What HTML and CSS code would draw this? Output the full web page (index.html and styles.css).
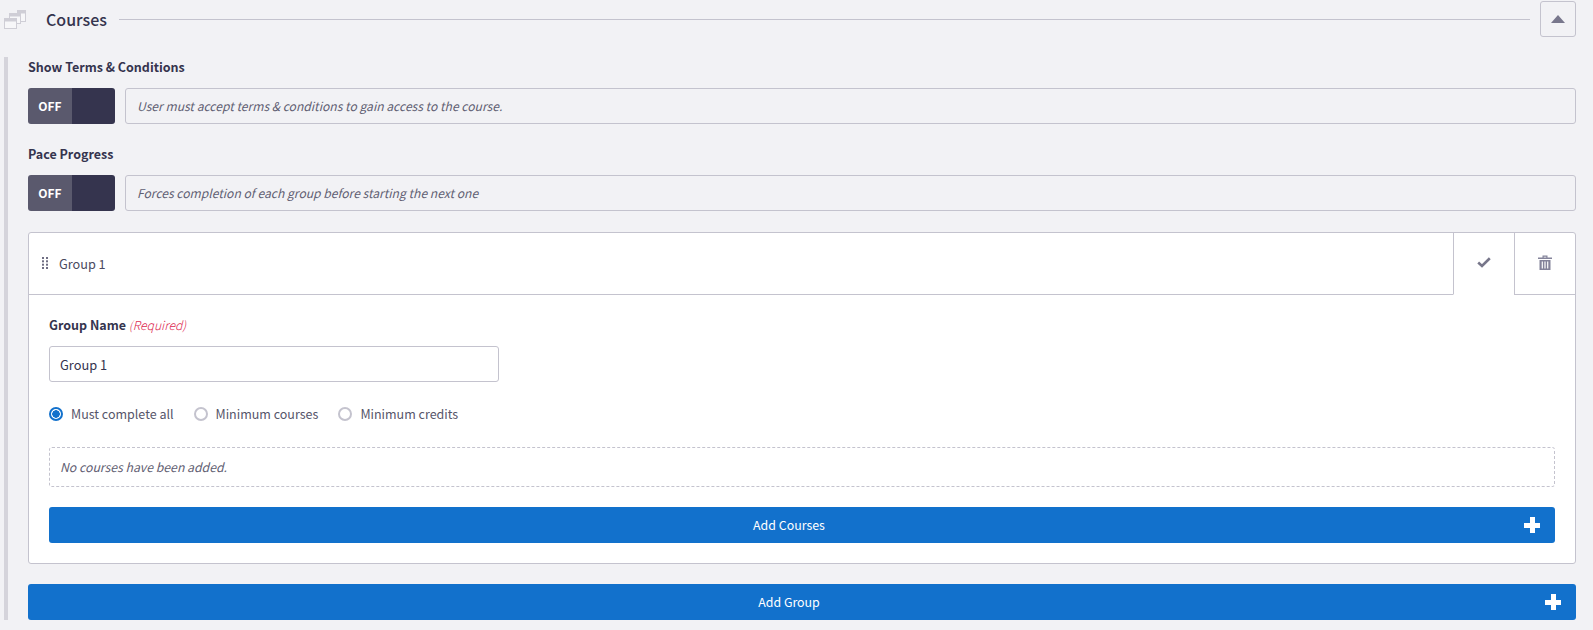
FILE: index.html
```html
<!DOCTYPE html>
<html lang="en">
<head>
<meta charset="utf-8">
<title>Courses</title>
<link rel="stylesheet" href="styles.css">
</head>
<body>
<header class="section-head">
  <svg class="section-icon" width="22" height="19" viewBox="0 0 22 19" fill="none" stroke="#cfced6" stroke-width="1">
    <rect x="13.500" y="0.500" width="8" height="11" fill="#f7f7f9"/>
    <path d="M13.500 2h8" stroke-width="3"/>
    <rect x="5.500" y="3.500" width="11" height="10" fill="#f7f7f9"/>
    <path d="M5.500 5h11" stroke-width="3"/>
    <rect x="0.500" y="8.500" width="12" height="10" fill="#f7f7f9"/>
    <path d="M0.500 10h12" stroke-width="3"/>
  </svg>
  <h2 class="section-title">Courses</h2>
  <div class="section-rule"></div>
  <button class="collapse-btn" type="button" aria-label="Collapse"><span class="caret-up"></span></button>
</header>
<main class="section-body">
  <div class="field">
    <div class="field-label">Show Terms &amp; Conditions</div>
    <div class="toggle-row">
      <div class="toggle"><span class="toggle-off">OFF</span><span class="toggle-rest"></span></div>
      <div class="toggle-desc">User must accept terms &amp; conditions to gain access to the course.</div>
    </div>
  </div>
  <div class="field">
    <div class="field-label">Pace Progress</div>
    <div class="toggle-row">
      <div class="toggle"><span class="toggle-off">OFF</span><span class="toggle-rest"></span></div>
      <div class="toggle-desc">Forces completion of each group before starting the next one</div>
    </div>
  </div>
  <section class="group">
    <div class="group-head">
      <div class="group-title">
        <svg class="grip" width="7" height="12" viewBox="0 0 7 12" fill="#6f6e83">
          <rect x="0" y="0" width="2" height="2"/><rect x="4" y="0" width="2" height="2"/>
          <rect x="0" y="3.300" width="2" height="2"/><rect x="4" y="3.300" width="2" height="2"/>
          <rect x="0" y="6.700" width="2" height="2"/><rect x="4" y="6.700" width="2" height="2"/>
          <rect x="0" y="10" width="2" height="2"/><rect x="4" y="10" width="2" height="2"/>
        </svg>
        <span>Group 1</span>
      </div>
      <div class="group-action is-open">
        <svg width="14" height="11" viewBox="0 0 14 11" fill="none" stroke="#77768a" stroke-width="2.600"><path d="M1.200 5.500 5 9 12.800 1.300"/></svg>
      </div>
      <div class="group-action">
        <svg width="14" height="15" viewBox="0 0 14 15" fill="#84839a"><path d="M0 2.500h14V4H0zM4.500 2.500V.5h5v2H8.300V1.700H5.700v.8zM1.500 5h11v10h-11zM3.700 6.500v7h1.200v-7zM6.400 6.500v7h1.200v-7zM9.100 6.500v7h1.200v-7z" fill-rule="evenodd"/></svg>
      </div>
    </div>
    <div class="group-body">
      <label class="name-label">Group Name <em class="required">(Required)</em></label>
      <input class="name-input" type="text" value="Group 1">
      <div class="radios">
        <span class="radio-item"><span class="radio is-checked"></span>Must complete all</span>
        <span class="radio-item"><span class="radio"></span>Minimum courses</span>
        <span class="radio-item"><span class="radio"></span>Minimum credits</span>
      </div>
      <div class="empty-note">No courses have been added.</div>
      <button class="add-btn" type="button">Add Courses<span class="plus"></span></button>
    </div>
  </section>
  <button class="add-btn add-group" type="button">Add Group<span class="plus"></span></button>
</main>
</body>
</html>
```
FILE: styles.css
```css
* { box-sizing: border-box; }
html, body { height: 100%; }
body {
  margin: 0;
  height: 630px;
  overflow: hidden;
  background: #f2f2f5;
  color: #35344e;
  font-family: "Noto Sans CJK SC", "Source Sans Pro", "Open Sans", sans-serif;
  font-size: 13px;
  line-height: 20px;
}
.section-head {
  display: flex;
  align-items: center;
  height: 36px;
  margin-top: 1px;
  padding: 0 17px 0 4px;
}
.section-icon { flex: none; margin-top: 1px; }
.section-title {
  margin: -1px 12px 0 20px;
  font-size: 16px;
  font-weight: 500;
  line-height: 24px;
}
.section-rule { flex: 1; height: 1px; background: #c4c3ce; }
.collapse-btn {
  display: flex;
  align-items: center;
  justify-content: center;
  flex: none;
  width: 36px;
  height: 36px;
  margin-left: 10px;
  padding: 0;
  background: transparent;
  border: 1px solid #c4c3ce;
  border-radius: 3px;
}
.caret-up {
  width: 0;
  height: 0;
  border-left: 7px solid transparent;
  border-right: 7px solid transparent;
  border-bottom: 8px solid #78778c;
}
.section-body {
  margin: 20px 17px 0 4px;
  padding: 0 0 0 20px;
  border-left: 4px solid #d5d4db;
}
.field { margin-bottom: 20px; }
.field-label {
  height: 31px;
  font-size: 12.500px;
  font-weight: 700;
  line-height: 20px;
}
.toggle-row { display: flex; gap: 10px; }
.toggle {
  display: flex;
  flex: none;
  width: 87px;
  height: 36px;
  border-radius: 3px;
  overflow: hidden;
  color: #fff;
  font-size: 12px;
  font-weight: 700;
}
.toggle-off {
  display: flex;
  align-items: center;
  justify-content: center;
  width: 44px;
  background: #5a596d;
}
.toggle-rest { flex: 1; background: #35344e; }
.toggle-desc {
  display: flex;
  align-items: center;
  flex: 1;
  height: 36px;
  padding-left: 11px;
  border: 1px solid #c4c3ce;
  border-radius: 3px;
  color: #5f5e72;
  font-size: 12.100px;
  font-style: italic;
}
.group {
  background: #fff;
  border: 1px solid #c4c3ce;
  border-radius: 3px;
  margin-top: 21px;
  height: 332px;
}
.group-head { display: flex; height: 62px; }
.group-title {
  display: flex;
  align-items: center;
  flex: 1;
  padding-left: 13px;
  border-bottom: 1px solid #c4c3ce;
  font-size: 12.700px;
  color: #4a4960;
}
.grip { margin-right: 10px; margin-top: -2px; }
.group-action {
  display: flex;
  align-items: center;
  justify-content: center;
  flex: none;
  width: 61px;
  border-left: 1px solid #c4c3ce;
  border-bottom: 1px solid #c4c3ce;
}
.group-action.is-open { border-bottom-color: transparent; }
.group-action svg { margin-top: -2px; }
.group-body { padding: 20px 20px 0; }
.name-label {
  display: block;
  height: 31px;
  font-size: 12.500px;
  font-weight: 700;
  line-height: 20px;
}
.required { color: #dd2a52; font-weight: 300; font-size: 12.200px; }
.name-input {
  display: block;
  width: 450px;
  height: 36px;
  padding: 0 10px;
  background: #fff;
  border: 1px solid #c4c3ce;
  border-radius: 3px;
  color: #35344e;
  font-family: inherit;
  font-size: 12.800px;
}
.radios {
  display: flex;
  gap: 20px;
  margin-top: 22px;
  color: #56556a;
  font-size: 12.500px;
}
.radio-item { display: flex; align-items: center; gap: 8px; }
.radio {
  flex: none;
  width: 14px;
  height: 14px;
  border: 2px solid #c4c3ce;
  border-radius: 50%;
  background: #fff;
}
.radio.is-checked {
  border-color: #1271cc;
  background: radial-gradient(circle, #1271cc 0 3.500px, #fff 4px);
}
.empty-note {
  display: flex;
  align-items: center;
  height: 40px;
  margin-top: 23px;
  padding-left: 10px;
  border: 1px dashed #c4c3ce;
  border-radius: 3px;
  color: #5f5e72;
  font-size: 12.250px;
  font-style: italic;
}
.add-btn {
  position: relative;
  display: block;
  width: 100%;
  height: 36px;
  margin-top: 20px;
  padding: 0 26px 0 0;
  background: #1271cc;
  border: 0;
  border-radius: 3px;
  color: #fff;
  font-family: inherit;
  font-size: 12.400px;
  font-weight: 400;
  text-align: center;
}
.add-group { margin-top: 20px; }
.plus {
  position: absolute;
  right: 15px;
  top: 10px;
  width: 16px;
  height: 16px;
  background:
    linear-gradient(#fff, #fff) center / 16px 5px no-repeat,
    linear-gradient(#fff, #fff) center / 5px 16px no-repeat;
}
```
